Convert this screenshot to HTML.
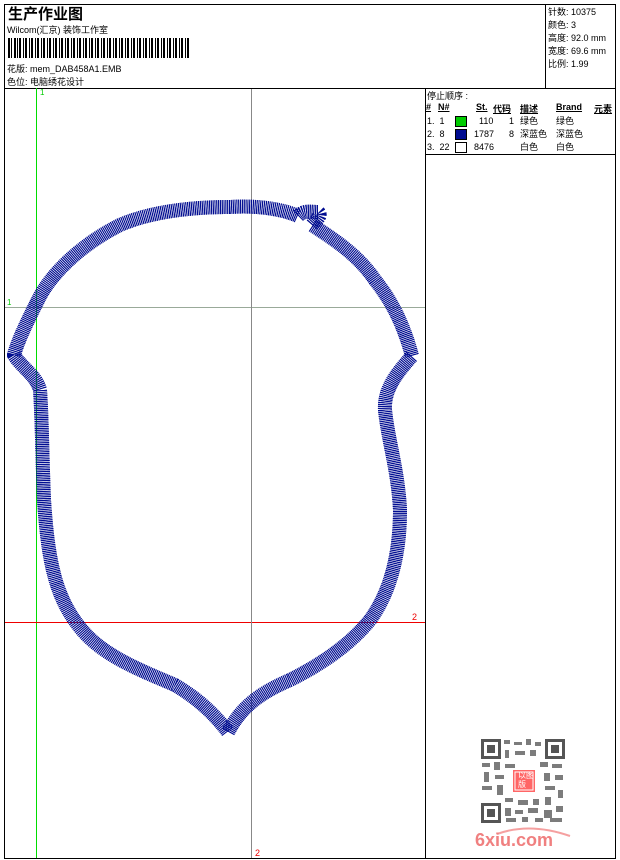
<!DOCTYPE html>
<html><head><meta charset="utf-8"><style>
body{margin:0;background:#fff;width:620px;height:860px;position:relative;overflow:hidden;font-family:"Liberation Sans","Noto Sans CJK SC",sans-serif;font-size:9px;color:#000}
.a{position:absolute;white-space:nowrap}
</style></head><body>
<svg class="a" style="left:0;top:0" width="620" height="860">
<rect x="4.5" y="4.5" width="611" height="854" fill="none" stroke="#000"/>
<line x1="4" y1="88.5" x2="616" y2="88.5" stroke="#000"/>
<line x1="545.5" y1="4" x2="545.5" y2="88" stroke="#000"/>
<line x1="425.5" y1="88" x2="425.5" y2="858" stroke="#000"/>
<line x1="426" y1="154.5" x2="616" y2="154.5" stroke="#000"/>
<g fill="#000">
<rect x="8" y="38" width="2" height="20"/><rect x="11" y="38" width="1" height="20"/><rect x="14" y="38" width="2" height="20"/><rect x="17" y="38" width="1" height="20"/><rect x="19" y="38" width="2" height="20"/><rect x="23" y="38" width="1" height="20"/><rect x="25" y="38" width="2" height="20"/><rect x="29" y="38" width="1" height="20"/><rect x="31" y="38" width="2" height="20"/><rect x="35" y="38" width="1" height="20"/><rect x="37" y="38" width="2" height="20"/><rect x="41" y="38" width="1" height="20"/><rect x="43" y="38" width="2" height="20"/><rect x="47" y="38" width="1" height="20"/><rect x="49" y="38" width="2" height="20"/><rect x="53" y="38" width="1" height="20"/><rect x="55" y="38" width="2" height="20"/><rect x="59" y="38" width="1" height="20"/><rect x="61" y="38" width="2" height="20"/><rect x="65" y="38" width="1" height="20"/><rect x="67" y="38" width="2" height="20"/><rect x="71" y="38" width="1" height="20"/><rect x="73" y="38" width="2" height="20"/><rect x="77" y="38" width="1" height="20"/><rect x="79" y="38" width="2" height="20"/><rect x="83" y="38" width="1" height="20"/><rect x="85" y="38" width="2" height="20"/><rect x="89" y="38" width="1" height="20"/><rect x="91" y="38" width="2" height="20"/><rect x="95" y="38" width="1" height="20"/><rect x="97" y="38" width="2" height="20"/><rect x="101" y="38" width="1" height="20"/><rect x="103" y="38" width="2" height="20"/><rect x="107" y="38" width="1" height="20"/><rect x="109" y="38" width="2" height="20"/><rect x="113" y="38" width="1" height="20"/><rect x="115" y="38" width="2" height="20"/><rect x="119" y="38" width="1" height="20"/><rect x="121" y="38" width="2" height="20"/><rect x="125" y="38" width="1" height="20"/><rect x="127" y="38" width="2" height="20"/><rect x="131" y="38" width="1" height="20"/><rect x="133" y="38" width="2" height="20"/><rect x="137" y="38" width="1" height="20"/><rect x="139" y="38" width="2" height="20"/><rect x="143" y="38" width="1" height="20"/><rect x="145" y="38" width="2" height="20"/><rect x="149" y="38" width="1" height="20"/><rect x="151" y="38" width="2" height="20"/><rect x="155" y="38" width="1" height="20"/><rect x="157" y="38" width="2" height="20"/><rect x="161" y="38" width="1" height="20"/><rect x="163" y="38" width="2" height="20"/><rect x="167" y="38" width="1" height="20"/><rect x="169" y="38" width="2" height="20"/><rect x="173" y="38" width="1" height="20"/><rect x="175" y="38" width="2" height="20"/><rect x="179" y="38" width="1" height="20"/><rect x="181" y="38" width="2" height="20"/><rect x="185" y="38" width="1" height="20"/><rect x="187" y="38" width="2" height="20"/>
</g>
<line x1="36.5" y1="88" x2="36.5" y2="858" stroke="#0d0"/>
<line x1="5" y1="307.5" x2="425" y2="307.5" stroke="#9a9"/>
<line x1="5" y1="622.5" x2="425" y2="622.5" stroke="#e00"/>
<line x1="251.5" y1="89" x2="251.5" y2="858" stroke="#888"/>
<g fill="none" stroke="#000c90" stroke-linejoin="round">
<path id="p" d="M230,207 C190,207 150,212 120,225 C80,245 50,275 38,300 C28,320 18,340 14,355 C22,368 36,375 40,390 C42,420 42,450 44,500 C48,560 55,595 78,625 C100,655 140,670 175,685 C200,700 215,715 228,732 C240,710 255,695 290,680 C320,665 350,645 370,620 C392,590 400,550 400,510 C398,470 388,440 385,410 C384,390 395,375 412,356 C405,330 395,305 375,280 C358,255 335,240 312,225 C318,218 322,215 318,212 C310,212 304,210 298,216 C285,210 260,205 230,207 Z" stroke-width="14" stroke-dasharray="1 0.8"/>
<use href="#p" stroke-width="7"/>
</g>
<g fill="#555">
<rect x="481" y="739" width="20" height="20"/><rect x="545" y="739" width="20" height="20"/><rect x="481" y="803" width="20" height="20"/>
</g>
<g fill="#fff"><rect x="484" y="742" width="14" height="14"/><rect x="548" y="742" width="14" height="14"/><rect x="484" y="806" width="14" height="14"/></g>
<g fill="#555"><rect x="487" y="745" width="8" height="8"/><rect x="551" y="745" width="8" height="8"/><rect x="487" y="809" width="8" height="8"/></g>
<g fill="#666" opacity="0.85">
<rect x="504" y="740" width="6" height="4"/><rect x="514" y="742" width="8" height="3"/><rect x="526" y="739" width="5" height="6"/><rect x="535" y="742" width="6" height="4"/>
<rect x="505" y="750" width="4" height="8"/><rect x="515" y="751" width="10" height="4"/><rect x="530" y="750" width="6" height="6"/>
<rect x="482" y="763" width="8" height="4"/><rect x="494" y="762" width="6" height="8"/><rect x="505" y="764" width="10" height="4"/><rect x="540" y="762" width="8" height="5"/><rect x="552" y="764" width="10" height="4"/>
<rect x="484" y="772" width="5" height="10"/><rect x="495" y="775" width="9" height="4"/><rect x="544" y="773" width="6" height="8"/><rect x="555" y="775" width="8" height="5"/>
<rect x="482" y="786" width="10" height="4"/><rect x="497" y="785" width="6" height="10"/><rect x="545" y="786" width="10" height="4"/><rect x="558" y="790" width="5" height="8"/>
<rect x="505" y="798" width="8" height="4"/><rect x="518" y="800" width="10" height="5"/><rect x="533" y="799" width="6" height="6"/><rect x="545" y="797" width="6" height="8"/>
<rect x="505" y="808" width="6" height="8"/><rect x="515" y="810" width="8" height="4"/><rect x="528" y="808" width="10" height="5"/><rect x="544" y="810" width="8" height="8"/><rect x="556" y="806" width="7" height="6"/>
<rect x="506" y="818" width="10" height="4"/><rect x="522" y="817" width="6" height="5"/><rect x="535" y="818" width="8" height="4"/><rect x="550" y="818" width="12" height="4"/>
</g>
<rect x="513" y="770" width="22" height="22" fill="#f66"/>
<rect x="515" y="772" width="18" height="18" fill="none" stroke="#fff" stroke-width="1"/>
<path d="M497,834 Q530,822 570,836" fill="none" stroke="#f5a0a0" stroke-width="2"/>
</svg>
<div class="a" style="left:8px;top:3px;font-size:15px;font-weight:bold;font-family:'Noto Sans CJK SC',sans-serif">生产作业图</div>
<div class="a" style="left:7px;top:23px">Wilcom(汇京) 装饰工作室</div>
<div class="a" style="left:7px;top:62px">花版: mem_DAB458A1.EMB</div>
<div class="a" style="left:7px;top:75px">色位: 电脑绣花设计</div>
<div class="a" style="left:548px;top:6px;line-height:13px">针数: 10375<br>颜色: 3<br>高度: 92.0 mm<br>宽度: 69.6 mm<br>比例: 1.99</div>
<div class="a" style="left:427px;top:89px">停止顺序 :</div>
<div class="a" style="left:426px;top:102px;font-weight:bold;text-decoration:underline">#</div>
<div class="a" style="left:438px;top:102px;font-weight:bold;text-decoration:underline">N#</div>
<div class="a" style="left:476px;top:102px;font-weight:bold;text-decoration:underline">St.</div>
<div class="a" style="left:493px;top:102px;font-weight:bold;text-decoration:underline">代码</div>
<div class="a" style="left:520px;top:102px;font-weight:bold;text-decoration:underline">描述</div>
<div class="a" style="left:556px;top:102px;font-weight:bold;text-decoration:underline">Brand</div>
<div class="a" style="left:594px;top:102px;font-weight:bold;text-decoration:underline">元素</div>
<div class="a" style="left:427px;top:115px;line-height:13px">1.&nbsp; 1<br>2.&nbsp; 8<br>3.&nbsp; 22</div>
<div class="a" style="left:455px;top:116px;width:10px;height:9px;background:#0c0;border:1px solid #000"></div>
<div class="a" style="left:455px;top:129px;width:10px;height:9px;background:#000c90;border:1px solid #000"></div>
<div class="a" style="left:455px;top:142px;width:10px;height:9px;background:#fff;border:1px solid #000"></div>
<div class="a" style="left:474px;top:115px;line-height:13px">&nbsp; 110<br>1787<br>8476</div>
<div class="a" style="left:509px;top:115px;line-height:13px">1<br>8</div>
<div class="a" style="left:520px;top:115px;line-height:13px">绿色<br>深蓝色<br>白色</div>
<div class="a" style="left:556px;top:115px;line-height:13px">绿色<br>深蓝色<br>白色</div>
<div class="a" style="left:40px;top:88px;color:#0c0;font-size:8px">1</div>
<div class="a" style="left:7px;top:298px;color:#0c0;font-size:8px">1</div>
<div class="a" style="left:412px;top:612px;color:#e00;font-size:9px">2</div>
<div class="a" style="left:255px;top:848px;color:#e00;font-size:9px">2</div>
<div class="a" style="left:518px;top:771px;color:#fff;font-size:8px;line-height:9px;font-family:'Noto Sans CJK SC',sans-serif">以图<br>版</div>
<div class="a" style="left:475px;top:830px;color:#f08080;font-size:18px;font-weight:bold">6xiu.com</div>
</body></html>
